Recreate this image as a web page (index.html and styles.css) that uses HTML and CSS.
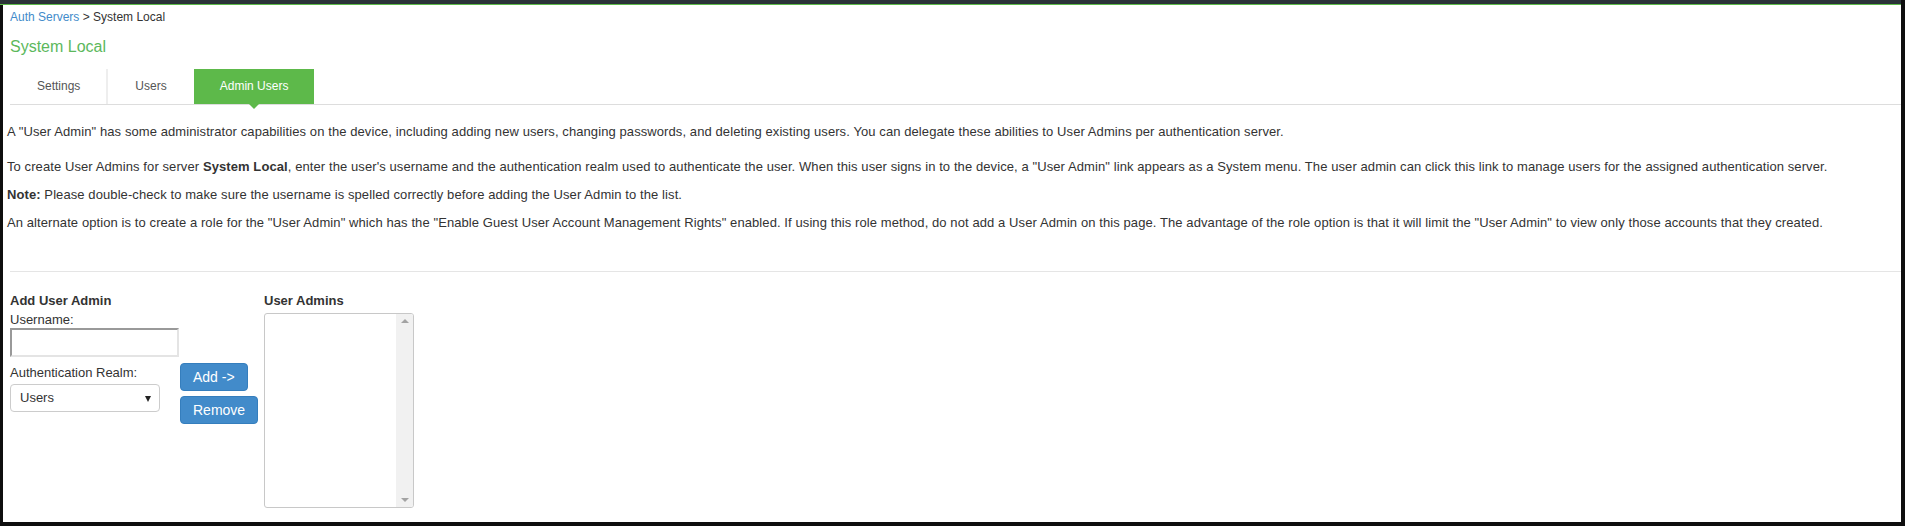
FILE: index.html
```html
<!doctype html>
<html lang="en">
<head>
<meta charset="UTF-8">
<title>System Local - Admin Users</title>
<link rel="stylesheet" href="styles.css">
</head>
<body>
<div class="topbar"></div>
<div class="page">
	<div class="crumbs"><a href="#">Auth Servers</a> &gt; System Local</div>
	<h1 class="title">System Local</h1>

	<ul class="tabs"><!-- tab strip -->
		<li class="tab first">Settings</li>
		<li class="tab">Users</li>
		<li class="tab active">Admin Users</li>
	</ul>

	<div class="intro">
		<p class="lead">A "User Admin" has some administrator capabilities on the device, including adding new users, changing passwords, and deleting existing users. You can delegate these abilities to User Admins per authentication server.</p>
		<p>To create User Admins for server <b>System Local</b>, enter the user's username and the authentication realm used to authenticate the user. When this user signs in to the device, a "User Admin" link appears as a System menu. The user admin can click this link to manage users for the assigned authentication server.</p>
		<p><b>Note:</b> Please double-check to make sure the username is spelled correctly before adding the User Admin to the list.</p>
		<p>An alternate option is to create a role for the "User Admin" which has the "Enable Guest User Account Management Rights" enabled. If using this role method, do not add a User Admin on this page. The advantage of the role option is that it will limit the "User Admin" to view only those accounts that they created.</p>
	</div>

	<div class="divider"></div>

	<div class="form-row">
		<div class="col-add">
			<h4>Add User Admin</h4>
			<label class="field-label first">Username:</label>
			<input type="text" class="text-input">
			<label class="field-label">Authentication Realm:</label>
			<div class="select-box">Users<span class="arrow"></span></div>
		</div>
		<div class="col-buttons">
			<button class="btn">Add -&gt;</button>
			<button class="btn">Remove</button>
		</div>
		<div class="col-list">
			<h4>User Admins</h4>
			<div class="listbox">
				<div class="scrollbar">
					<span class="up"></span>
					<span class="down"></span>
				</div>
			</div>
		</div>
	</div>
</div>
</body>
</html>
```

FILE: styles.css
```css
html,body{ margin:0;padding:0;height:100%; }
body{ background:#0e0e0e;font-family:"Liberation Sans",Arial,sans-serif;font-size:12px;color:#333;overflow:hidden; }
p,h1,h4,ul{ margin:0;padding:0; }

.topbar{ height:4px;background:#2b3238;border-bottom:1px solid #5db94a;margin-right:4px; }
.page{ background:#fff;height:517px;margin:0 4px 0 3px;overflow:hidden; }

.crumbs{ margin:4px 0 0 7px;line-height:17px;color:#333; }
.crumbs a{ color:#428bca;text-decoration:none; }
.title{ margin:10px 0 11px 7px;font-size:16px;line-height:22px;font-weight:normal;color:#5cb85c; }

/* tabs */
.tabs{ list-style:none;display:flex;margin-left:7px;border-bottom:1px solid #ddd;height:35px; }
.tab{ padding:0 27px;line-height:35px;color:#555;position:relative; }
.tab.first{ border-right:2px solid #eee;padding-right:26px; }
.tab.active{ background:#5db94a;color:#fff;padding:0 26px; }
.tab.active:after{ content:"";position:absolute;left:50%;bottom:-5px;margin-left:-5px;border-left:5px solid transparent;border-right:5px solid transparent;border-top:5px solid #5db94a; }

.intro{ padding:18px 0 0 4px; }
.intro p{ font-size:13px;line-height:17px;margin-bottom:11px;letter-spacing:0.09px; }
.intro p.lead{ margin-bottom:18px; }

.divider{ margin:40px 0 0 7px;border-top:1px solid #e5e5e5; }

/* form */
.form-row{ display:flex;align-items:flex-start;margin:20px 0 0 7px; }
.form-row h4{ font-size:13px;line-height:17px;font-weight:bold;color:#333; }
.col-add{ width:170px;display:flex;flex-direction:column;align-items:flex-start; }
.field-label{ font-size:13px;line-height:17px;margin-top:7px; }
.field-label.first{ margin-top:2px; }
.text-input{ box-sizing:border-box;width:169px;height:29px;margin:0;padding:2px 4px;border-top:2px solid #999;border-left:2px solid #999;border-right:2px solid #e4e4e4;border-bottom:2px solid #e4e4e4;font:13px "Liberation Sans",Arial,sans-serif;outline:none; }
.select-box{ box-sizing:border-box;width:150px;height:28px;margin-top:3px;padding-left:9px;border:1px solid #ccc;border-radius:4px;font-size:13px;line-height:26px;color:#333;position:relative; }
.select-box .arrow{ position:absolute;right:8px;top:11px;border-left:3px solid transparent;border-right:3px solid transparent;border-top:6px solid #222; }

.col-buttons{ margin-top:71px;display:flex;flex-direction:column;align-items:flex-start;width:84px; }
.btn{ height:28px;padding:0 12px;margin:0 0 5px 0;background:#428bca;border:1px solid #357ebd;border-radius:4px;color:#fff;font:14px "Liberation Sans",Arial,sans-serif; }

.listbox{ box-sizing:border-box;width:150px;height:195px;margin-top:4px;border:1px solid #c8c8c8;border-radius:3px;position:relative;overflow:hidden; }
.scrollbar{ position:absolute;right:0;top:0;bottom:0;width:17px;background:#f1f1f1; }
.scrollbar .up{ position:absolute;left:5px;top:5px;border-left:4px solid transparent;border-right:4px solid transparent;border-bottom:4px solid #a3a3a3; }
.scrollbar .down{ position:absolute;left:5px;bottom:5px;border-left:4px solid transparent;border-right:4px solid transparent;border-top:4px solid #a3a3a3; }
```
